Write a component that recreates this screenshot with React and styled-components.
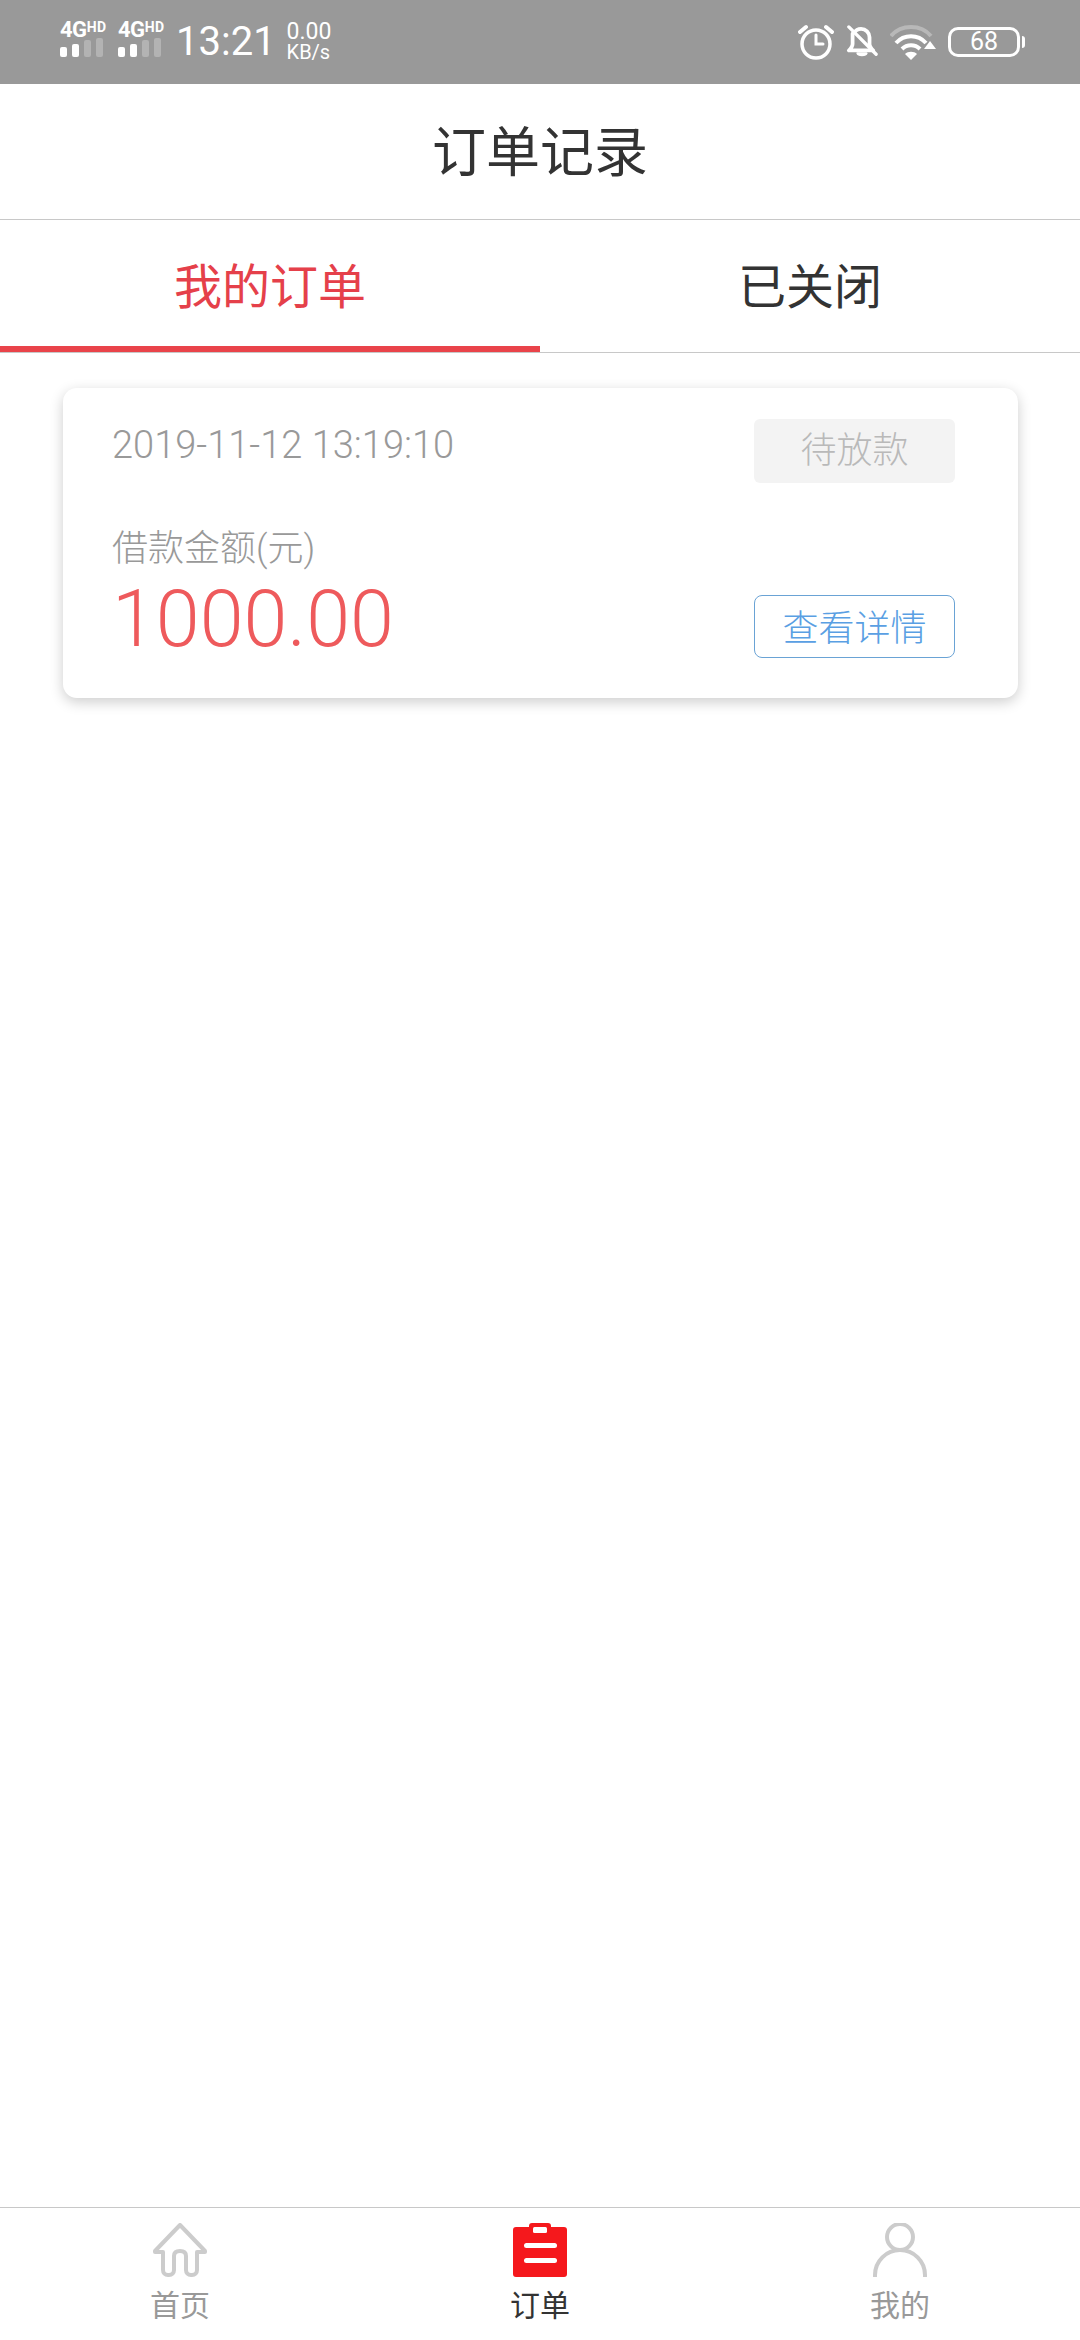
import React from 'react'
import styled, { createGlobalStyle } from 'styled-components'

const GlobalStyle = createGlobalStyle`
  html, body {
    margin: 0;
    padding: 0;
    background: #fff;
  }
  body {
    font-family: Roboto, "Noto Sans CJK SC", sans-serif;
    font-weight: 300;
  }
`

const Page = styled.div`
  display: flex;
  flex-direction: column;
  width: 1080px;
  height: 2340px;
  background: #fff;
  overflow: hidden;
`

const StatusBar = styled.div`
  display: flex;
  align-items: center;
  justify-content: space-between;
  flex-shrink: 0;
  height: 84px;
  padding: 0 60px;
  box-sizing: border-box;
  background: #999;
  color: #fff;
`

const StatusGroup = styled.div`
  display: flex;
  align-items: center;
  gap: ${p => p.$gap}px;
`

const SignalWrap = styled.div`
  display: flex;
  flex-direction: column;
  width: 46px;
  margin: 0 12px 4px 0;
`

const SignalText = styled.div`
  font: 700 22px/14px Roboto, sans-serif;
  letter-spacing: -0.5px;
  white-space: nowrap;
  sup {
    font-size: 14px;
    line-height: 0;
    vertical-align: 5px;
    letter-spacing: 0.5px;
  }
`

const Bars = styled.div`
  display: flex;
  align-items: flex-end;
  gap: 5px;
  height: 20px;
`

const Bar = styled.span`
  width: 7px;
  height: ${p => p.$h}px;
  border-radius: 2px;
  background: ${p => (p.$on ? '#fff' : '#b3b3b3')};
`

const Clock = styled.div`
  font: 400 40px/1 Roboto, sans-serif;
`

const Speed = styled.div`
  margin-left: 11px;
  font: 400 23px/21px Roboto, sans-serif;
  span {
    display: block;
    font-size: 20px;
  }
`

const Battery = styled.div`
  position: relative;
  width: 72px;
  height: 30px;
  box-sizing: border-box;
  border: 3px solid #fff;
  border-radius: 10px;
  font: 400 25px/24px Roboto, sans-serif;
  text-align: center;
  &::after {
    content: '';
    position: absolute;
    right: -8px;
    top: 6px;
    width: 3px;
    height: 12px;
    border-radius: 0 3px 3px 0;
    background: #fff;
  }
`

const Header = styled.div`
  flex-shrink: 0;
  height: 136px;
  line-height: 139px;
  box-sizing: border-box;
  border-bottom: 1px solid #c8c8c8;
  text-align: center;
  font-size: 54px;
  font-weight: 400;
  color: #333;
`

const Tabs = styled.div`
  display: flex;
  flex-shrink: 0;
  height: 133px;
  box-sizing: border-box;
  border-bottom: 1px solid #c8c8c8;
`

const Tab = styled.div`
  flex: 1;
  height: 132px;
  line-height: 136px;
  box-sizing: border-box;
  text-align: center;
  font-size: 48px;
  font-weight: 400;
  color: ${p => (p.$active ? '#e5404a' : '#333')};
  border-bottom: ${p => (p.$active ? '6px solid #e9434a' : 'none')};
`

const Content = styled.div`
  flex: 1;
  padding: 35px 62px 0 63px;
`

const Card = styled.div`
  display: flex;
  justify-content: space-between;
  height: 310px;
  padding: 31px 63px 40px 49px;
  box-sizing: border-box;
  border-radius: 14px;
  background: #fff;
  box-shadow: 0 4px 14px rgba(0, 0, 0, 0.2);
`

const Info = styled.div`
  display: flex;
  flex-direction: column;
`

const DateText = styled.div`
  margin-top: 1px;
  font-size: 38px;
  line-height: 50px;
  color: #999;
`

const Label = styled.div`
  margin-top: 54px;
  font-size: 36px;
  line-height: 50px;
  color: #999;
`

const Amount = styled.div`
  margin-top: 3px;
  font-size: 79px;
  line-height: 84px;
  color: #ee5a5c;
`

const Actions = styled.div`
  display: flex;
  flex-direction: column;
  justify-content: space-between;
  width: 201px;
`

const StatusBadge = styled.div`
  height: 64px;
  line-height: 64px;
  border-radius: 6px;
  background: #f3f3f3;
  color: #b9b9b9;
  font-size: 36px;
  text-align: center;
`

const DetailButton = styled.div`
  height: 63px;
  line-height: 66px;
  box-sizing: border-box;
  border: 1px solid #6aa3d5;
  border-radius: 8px;
  color: #5a9fe3;
  font-size: 36px;
  text-align: center;
`

const TabBar = styled.div`
  display: flex;
  flex-shrink: 0;
  height: 133px;
  box-sizing: border-box;
  border-top: 1px solid #c8c8c8;
`

const TabItem = styled.div`
  flex: 1;
  display: flex;
  flex-direction: column;
  align-items: center;
  padding-top: 15px;
  font-size: 30px;
  line-height: 40px;
  font-weight: 400;
  color: ${p => (p.$active ? '#333' : '#999')};
  svg {
    display: block;
    margin-bottom: 9px;
  }
`

const AlarmIcon = () => (
  <svg width="36" height="36" viewBox="0 0 36 36" fill="none" stroke="#fff" strokeLinecap="round">
    <circle cx="18" cy="20" r="14" strokeWidth="3.5" />
    <path d="M18 11v9h7" strokeWidth="3" />
    <path d="M2 8l6-5M34 8l-6-5" strokeWidth="4" />
  </svg>
)

const BellOffIcon = () => (
  <svg width="32" height="36" viewBox="0 0 34 36" fill="none" stroke="#fff" strokeLinecap="round" strokeLinejoin="round">
    <path d="M7 9v11c0 3-2 5-4 7h26c-2-2-4-4-4-7v-7c0-5-4-9-9-9-3 0-6 2-7 4" strokeWidth="4" />
    <path d="M12 30c1 3 9 3 10 0z" fill="#fff" strokeWidth="2" />
    <path d="M3 2l29 29" strokeWidth="3.5" />
  </svg>
)

const WifiIcon = () => (
  <svg width="46" height="36" viewBox="0 0 46 36">
    <path d="M1 12C11 0 31 0 41 12" fill="none" stroke="#b8b8b8" strokeWidth="4" />
    <path d="M6 19c8-9 22-9 30 0" fill="none" stroke="#fff" strokeWidth="4" />
    <path d="M12 25c5-5 13-5 18 0" fill="none" stroke="#fff" strokeWidth="4" />
    <path d="M15 30c3-3 9-3 12 0l-6 6z" fill="#fff" />
    <path d="M40 17l6 8h-12z" fill="#fff" />
  </svg>
)

const HomeIcon = () => (
  <svg width="54" height="54" viewBox="0 0 54 54" fill="none" stroke="#ccc" strokeWidth="4" strokeLinejoin="round" strokeLinecap="round">
    <path d="M27 2L2 28l0 1h8v18c0 3 2 5 5 5h1c3 0 5-2 5-5V33c0-3 2-5 6-5s6 2 6 5v14c0 3 2 5 5 5h1c3 0 5-2 5-5V29h8v-1z" />
  </svg>
)

const OrderIcon = () => (
  <svg width="54" height="54" viewBox="0 0 54 54">
    <path d="M3 4h13V3c0-2 1-3 3-3h16c2 0 3 1 3 3v1h13c2 0 3 1 3 3v44c0 2-1 3-3 3H3c-2 0-3-1-3-3V7c0-2 1-3 3-3z" fill="#f5181c" />
    <rect x="20" y="4" width="14" height="6" rx="1.5" fill="#fff" />
    <rect x="11" y="20" width="33" height="5" rx="2.5" fill="#fff" />
    <rect x="11" y="35" width="33" height="5" rx="2.5" fill="#fff" />
  </svg>
)

const UserIcon = () => (
  <svg width="54" height="54" viewBox="0 0 54 54" fill="none" stroke="#ccc" strokeWidth="4">
    <circle cx="27" cy="14" r="13" />
    <path d="M2 54v-2a25 25 0 0 1 50 0v2" />
  </svg>
)

function App() {
  return (
    <Page>
      <GlobalStyle />
      <StatusBar>
        <StatusGroup $gap={0}>
          <SignalWrap>
            <SignalText>4G<sup>HD</sup></SignalText>
            <Bars>
              <Bar $on $h={10} />
              <Bar $on $h={13} />
              <Bar $h={17} />
              <Bar $h={19} />
            </Bars>
          </SignalWrap>
          <SignalWrap>
            <SignalText>4G<sup>HD</sup></SignalText>
            <Bars>
              <Bar $on $h={10} />
              <Bar $on $h={13} />
              <Bar $h={17} />
              <Bar $h={19} />
            </Bars>
          </SignalWrap>
          <Clock>13:21</Clock>
          <Speed>
            0.00
            <span>KB/s</span>
          </Speed>
        </StatusGroup>
        <StatusGroup $gap={12}>
          <AlarmIcon />
          <BellOffIcon />
          <WifiIcon />
          <Battery>68</Battery>
        </StatusGroup>
      </StatusBar>
      <Header>订单记录</Header>
      <Tabs>
        <Tab $active>我的订单</Tab>
        <Tab>已关闭</Tab>
      </Tabs>
      <Content>
        <Card>
          <Info>
            <DateText>2019-11-12 13:19:10</DateText>
            <Label>借款金额(元)</Label>
            <Amount>1000.00</Amount>
          </Info>
          <Actions>
            <StatusBadge>待放款</StatusBadge>
            <DetailButton>查看详情</DetailButton>
          </Actions>
        </Card>
      </Content>
      <TabBar>
        <TabItem>
          <HomeIcon />
          首页
        </TabItem>
        <TabItem $active>
          <OrderIcon />
          订单
        </TabItem>
        <TabItem>
          <UserIcon />
          我的
        </TabItem>
      </TabBar>
    </Page>
  )
}

export default App
